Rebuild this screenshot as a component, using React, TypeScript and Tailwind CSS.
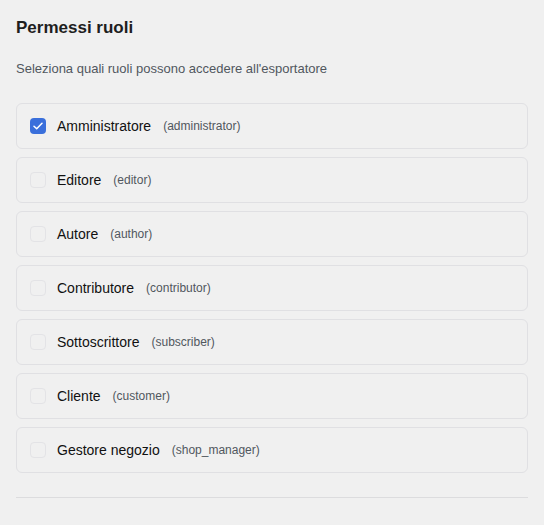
import React, { useState } from "react";

const roles = [
  { label: "Amministratore", key: "administrator" },
  { label: "Editore", key: "editor" },
  { label: "Autore", key: "author" },
  { label: "Contributore", key: "contributor" },
  { label: "Sottoscrittore", key: "subscriber" },
  { label: "Cliente", key: "customer" },
  { label: "Gestore negozio", key: "shop_manager" },
];

export default function App() {
  const [checked, setChecked] = useState<Record<string, boolean>>({ administrator: true });
  return (
    <div className="min-h-[525px] w-full bg-[#f0f0f0] px-4 pt-[17px] font-['Liberation_Sans',Arial,sans-serif]">
      <h2 className="text-[17px] font-bold leading-[22px] text-[#1e1e1e]">Permessi ruoli</h2>
      <p className="mt-[21px] text-[13px] leading-[18px] text-[#50575e]">
        Seleziona quali ruoli possono accedere all'esportatore
      </p>
      <div className="mt-[25px] flex flex-col gap-2">
        {roles.map((r) => {
          const on = !!checked[r.key];
          return (
            <label
              key={r.key}
              className="flex h-[46px] cursor-pointer items-center rounded-md border border-[#e0e0e3] px-[13px]"
            >
              <span
                onClick={() => setChecked((c) => ({ ...c, [r.key]: !c[r.key] }))}
                className={
                  on
                    ? "flex h-4 w-4 items-center justify-center rounded-[4px] bg-[#3a6fdb]"
                    : "flex h-4 w-4 items-center justify-center rounded-[4px] border border-[#e3e3e6]"
                }
              >
                {on && (
                  <svg width="10" height="8" viewBox="0 0 10 8" fill="none">
                    <path d="M1 4.2 L3.7 6.8 L9 1.2" stroke="white" strokeWidth="1.5" strokeLinecap="round" strokeLinejoin="round" />
                  </svg>
                )}
              </span>
              <span className="ml-[11px] text-[14px] text-[#111]">{r.label}</span>
              <span className="ml-[12px] text-[12px] text-[#50575e]">({r.key})</span>
            </label>
          );
        })}
      </div>
      <div className="mt-6 h-px bg-[#dcdcde]" />
    </div>
  );
}
